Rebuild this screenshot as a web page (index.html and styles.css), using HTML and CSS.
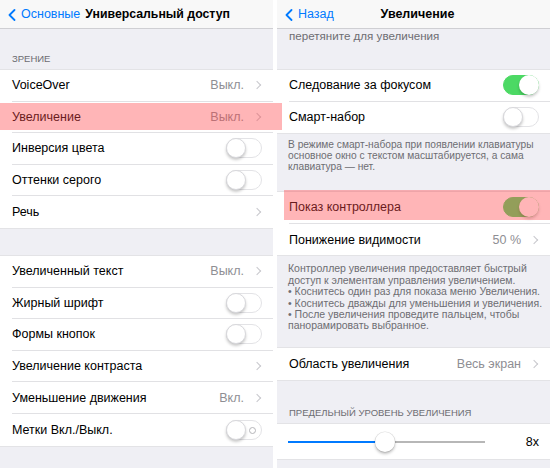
FILE: index.html
```html
<!DOCTYPE html>
<html lang="ru">
  <head>
    <meta charset="UTF-8" />
    <meta name="viewport" content="width=device-width, initial-scale=1.0" />
    <title>Универсальный доступ — Увеличение</title>
    <link rel="stylesheet" href="styles.css">
  </head>
  <body>
    <div class="screens">
      <!-- Экран 1: Универсальный доступ -->
      <section class="screen">
        <header class="navbar">
          <a href="#" class="back">
            <svg class="back-chevron" width="8" height="12" viewBox="0 0 8 12" fill="none" stroke="currentColor" stroke-width="1.8" stroke-linecap="round" stroke-linejoin="round">
              <path d="M6.5 1L1.5 6l5 5" />
            </svg>
            Основные
          </a>
          <h1 class="nav-title">Универсальный доступ</h1>
        </header>

        <div class="group-header first">ЗРЕНИЕ</div>
        <div class="group">
          <div class="row"><div class="row-body"><span class="label">VoiceOver</span><span class="value">Выкл.</span><span class="chevron"></span></div></div>
          <div class="row"><div class="row-body"><span class="label">Увеличение</span><span class="value">Выкл.</span><span class="chevron"></span></div></div>
          <div class="row"><div class="row-body"><span class="label">Инверсия цвета</span><span class="switch"></span></div></div>
          <div class="row"><div class="row-body"><span class="label">Оттенки серого</span><span class="switch"></span></div></div>
          <div class="row"><div class="row-body"><span class="label">Речь</span><span class="chevron"></span></div></div>
        </div>

        <div class="group-gap"></div>
        <div class="group">
          <div class="row"><div class="row-body"><span class="label">Увеличенный текст</span><span class="value">Выкл.</span><span class="chevron"></span></div></div>
          <div class="row"><div class="row-body"><span class="label">Жирный шрифт</span><span class="switch"></span></div></div>
          <div class="row"><div class="row-body"><span class="label">Формы кнопок</span><span class="switch"></span></div></div>
          <div class="row"><div class="row-body"><span class="label">Увеличение контраста</span><span class="chevron"></span></div></div>
          <div class="row"><div class="row-body"><span class="label">Уменьшение движения</span><span class="value">Вкл.</span><span class="chevron"></span></div></div>
          <div class="row"><div class="row-body"><span class="label">Метки Вкл./Выкл.</span><span class="switch with-label"></span></div></div>
        </div>
      </section>

      <!-- Экран 2: Увеличение -->
      <section class="screen">
        <header class="navbar centered">
          <a href="#" class="back">
            <svg class="back-chevron" width="8" height="12" viewBox="0 0 8 12" fill="none" stroke="currentColor" stroke-width="1.8" stroke-linecap="round" stroke-linejoin="round">
              <path d="M6.5 1L1.5 6l5 5" />
            </svg>
            Назад
          </a>
          <h1 class="nav-title">Увеличение</h1>
          <span></span>
        </header>

        <div class="scrolled-footer"><p>перетяните для увеличения</p></div>
        <div class="group">
          <div class="row"><div class="row-body"><span class="label">Следование за фокусом</span><span class="switch on"></span></div></div>
          <div class="row"><div class="row-body"><span class="label">Смарт-набор</span><span class="switch"></span></div></div>
        </div>
        <p class="group-footer short">
          В режиме смарт-набора при появлении клавиатуры<br />
          основное окно с текстом масштабируется, а сама<br />
          клавиатура — нет.
        </p>

        <div class="group">
          <div class="row"><div class="row-body"><span class="label">Показ контроллера</span><span class="switch on"></span></div></div>
          <div class="row"><div class="row-body"><span class="label">Понижение видимости</span><span class="value">50 %</span><span class="chevron"></span></div></div>
        </div>
        <p class="group-footer long">
          Контроллер увеличения предоставляет быстрый<br />
          доступ к элементам управления увеличением.<br />
          • Коснитесь один раз для показа меню Увеличения.<br />
          • Коснитесь дважды для уменьшения и увеличения.<br />
          • После увеличения проведите пальцем, чтобы<br />
          панорамировать выбранное.
        </p>

        <div class="group">
          <div class="row tall"><div class="row-body"><span class="label">Область увеличения</span><span class="value">Весь экран</span><span class="chevron"></span></div></div>
        </div>

        <div class="group-header">ПРЕДЕЛЬНЫЙ УРОВЕНЬ УВЕЛИЧЕНИЯ</div>
        <div class="group">
          <div class="slider-row">
            <div class="slider">
              <div class="slider-fill" style="width: 49.5%"></div>
              <div class="slider-thumb" style="left: 49.5%"></div>
            </div>
            <span class="slider-value">8x</span>
          </div>
        </div>
      </section>
    </div>

    <!-- выделения поверх экранов -->
    <div class="highlight highlight-left"></div>
    <div class="highlight highlight-right"></div>
  </body>
</html>
```

FILE: styles.css
```css
:root {
  --blue: #007aff;
  --green: #4cd964;
  --background: #efeff4;
  --muted: #8e8e93;
  --footer: #6d6d72;
}

body,
html {
  margin: 0;
  padding: 0;
  font-family: "Liberation Sans", Arial, sans-serif;
  color: #000;
  background-color: #fff;
}

.screens {
  display: flex;
  gap: 4px;
  width: 550px;
  height: 468px;
  overflow: hidden;
}

.screen {
  width: 273px;
  height: 468px;
  background-color: var(--background);
  overflow: hidden;
  position: relative;
}

/* навигация */
.navbar {
  height: 28px;
  background-color: #f8f8f8;
  border-bottom: 1px solid #cfcfd3;
  display: flex;
  align-items: center;
  padding: 0 0 0 8px;
  position: relative;
  z-index: 2;
}

.navbar.centered {
  display: grid;
  grid-template-columns: 1fr auto 1fr;
}

.back {
  display: flex;
  align-items: center;
  gap: 5px;
  color: var(--blue);
  text-decoration: none;
  font-size: 12.5px;
}

.back-chevron {
  margin-top: 1px;
}

.nav-title {
  margin: 0 0 0 5px;
  font-size: 12.3px;
  font-weight: 700;
}

.navbar.centered .nav-title {
  margin: 0;
  font-size: 12.5px;
}

/* группы */
.group-header {
  height: 42px;
  box-sizing: border-box;
  padding: 0 12px 5px;
  display: flex;
  align-items: flex-end;
  font-size: 9.5px;
  color: var(--footer);
}

.group-header.first {
  height: 40px;
}

.group-gap {
  height: 26px;
}

.group {
  background-color: #fff;
  border-top: 1px solid #e3e3e6;
  border-bottom: 1px solid #e3e3e6;
}

.row {
  height: 31.6px;
  padding-left: 12px;
}

.row.tall {
  height: 32px;
}

.row-body {
  height: 100%;
  box-sizing: border-box;
  display: flex;
  align-items: center;
  padding-right: 11px;
  border-bottom: 1px solid #e1e1e4;
}

.row:last-child .row-body {
  border-bottom: none;
}

.label {
  flex: 1;
  font-size: 12.5px;
}

.value {
  font-size: 12.5px;
  color: var(--muted);
  margin-right: 10px;
}

.chevron {
  width: 5px;
  height: 5px;
  border-top: 1.2px solid #c7c7cc;
  border-right: 1.2px solid #c7c7cc;
  transform: rotate(45deg);
  margin-right: 2px;
}

/* переключатели */
.switch {
  width: 36px;
  height: 20px;
  box-sizing: border-box;
  border-radius: 10px;
  border: 1.2px solid #e3e3e6;
  background-color: #fff;
  position: relative;
}

.switch::after {
  content: "";
  position: absolute;
  top: -1.2px;
  left: -1.2px;
  width: 20px;
  height: 20px;
  box-sizing: border-box;
  border-radius: 50%;
  background-color: #fff;
  border: 0.5px solid #d8d8dc;
  box-shadow: 0 2px 3px rgba(0, 0, 0, 0.22);
}

.switch.on {
  background-color: var(--green);
  border-color: var(--green);
}

.switch.on::after {
  left: auto;
  right: -1.2px;
  border-color: transparent;
}

.switch.with-label::before {
  content: "";
  position: absolute;
  right: 5px;
  top: 6px;
  width: 5px;
  height: 5px;
  border-radius: 50%;
  border: 1px solid #b5b5b9;
}

/* сноски */
.scrolled-footer {
  height: 40px;
  padding: 0 12px;
  box-sizing: border-box;
}

.scrolled-footer p {
  margin: 0;
  font-size: 11.6px;
  line-height: 13.4px;
  color: var(--footer);
}

.group-footer {
  margin: 0;
  padding: 6px 4px 0 11px;
  box-sizing: border-box;
  font-size: 10.2px;
  line-height: 10.8px;
  color: var(--footer);
  white-space: nowrap;
}

.group-footer.short {
  height: 57px;
}

.group-footer.long {
  height: 91px;
  padding-top: 7px;
  line-height: 11.4px;
  font-size: 10.5px;
}

/* слайдер */
.slider-row {
  height: 35px;
  display: flex;
  align-items: center;
  padding: 0 11px;
  gap: 41px;
}

.slider {
  flex: 1;
  height: 2px;
  background-color: #b7b7b7;
  position: relative;
}

.slider-fill {
  height: 100%;
  background-color: var(--blue);
}

.slider-thumb {
  position: absolute;
  top: -9px;
  width: 20px;
  height: 20px;
  margin-left: -10px;
  border-radius: 50%;
  background-color: #fff;
  box-shadow: 0 2px 3px rgba(0, 0, 0, 0.25), 0 0 0 0.5px rgba(0, 0, 0, 0.12);
}

.slider-value {
  font-size: 12.5px;
}

/* выделения */
.highlight {
  position: absolute;
  background-color: rgba(255, 70, 75, 0.4);
  pointer-events: none;
}

.highlight-left {
  left: 0;
  top: 103px;
  width: 282px;
  height: 27px;
}

.highlight-right {
  left: 284px;
  top: 190px;
  width: 266px;
  height: 30px;
}
```
